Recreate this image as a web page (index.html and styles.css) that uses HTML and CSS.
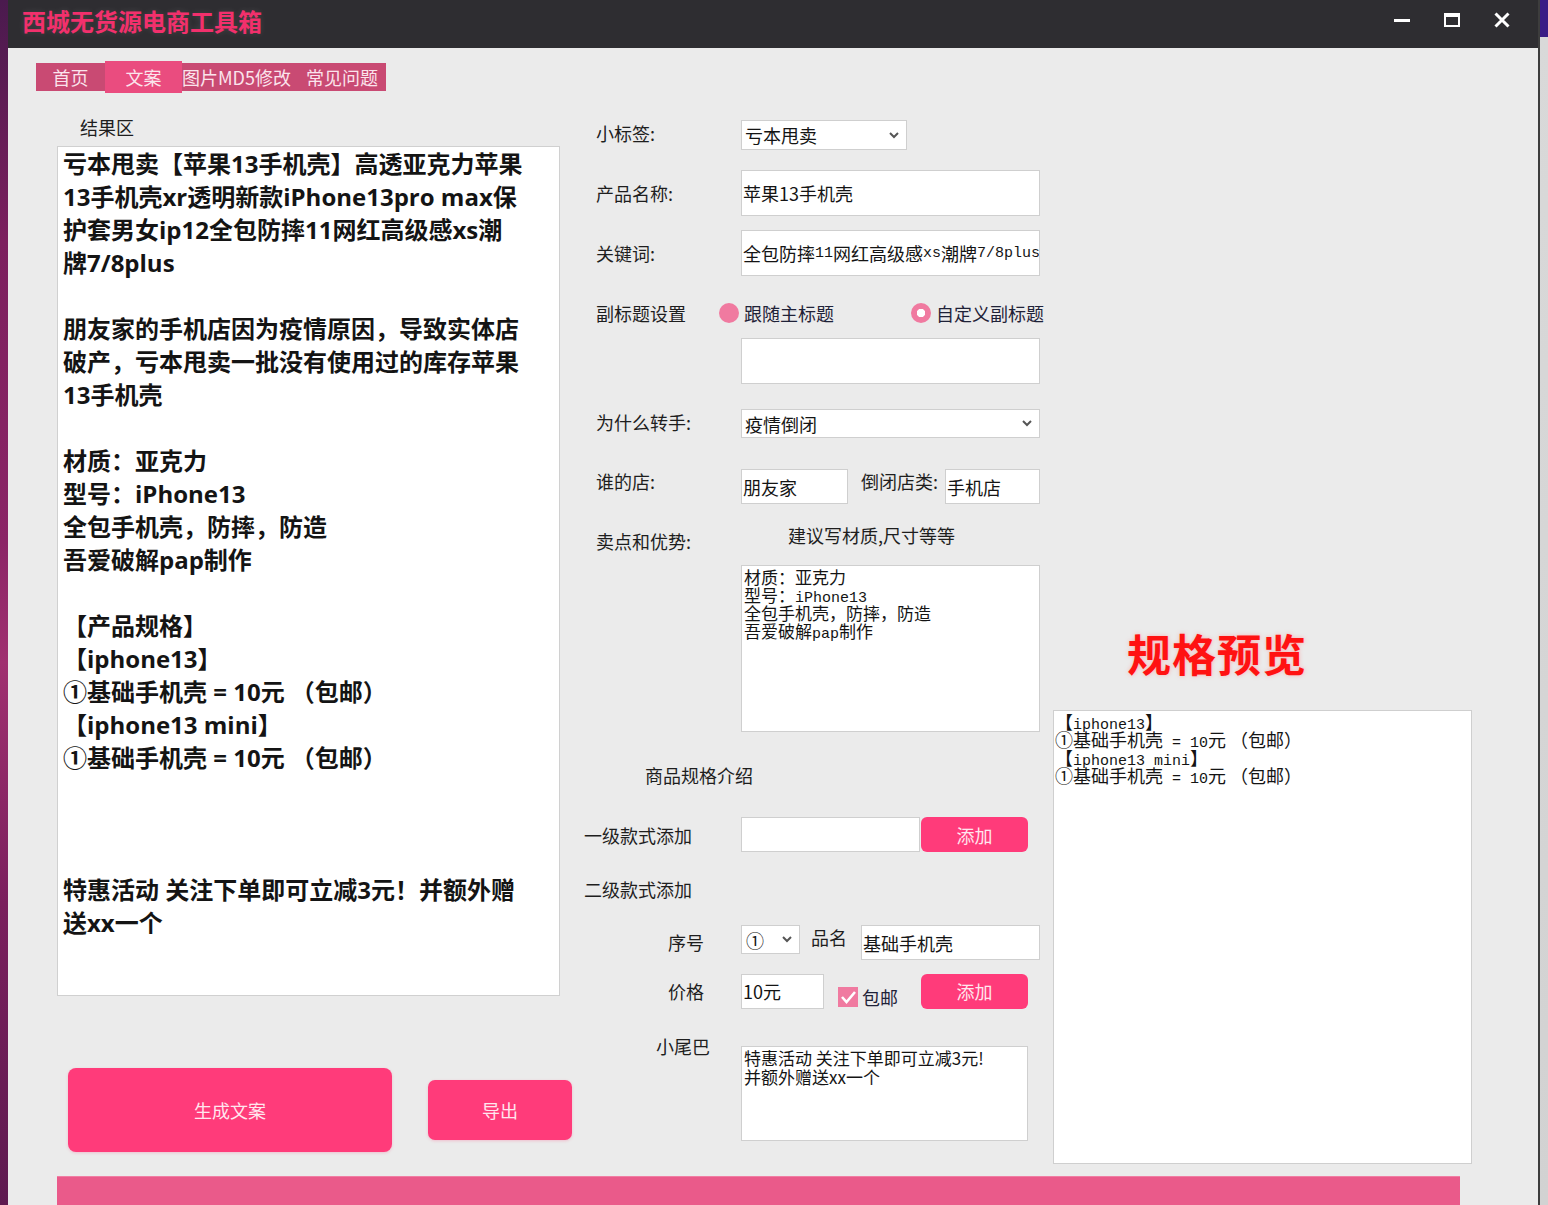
FILE: index.html
```html
<!DOCTYPE html>
<html lang="zh-CN">
<head>
<meta charset="utf-8">
<title>西城无货源电商工具箱</title>
<link rel="stylesheet" href="styles.css">
</head>
<body>
<div class="screen">
  <div class="desk-left"></div>
  <div class="window">
    <header class="titlebar">
      <h1 class="app-title">西城无货源电商工具箱</h1>
      <div class="win-controls">
        <span class="wc"><svg width="16" height="16" viewBox="0 0 16 16"><rect x="0" y="7" width="16" height="3" fill="#fff"/></svg></span>
        <span class="wc"><svg width="16" height="14" viewBox="0 0 16 14"><rect x="1" y="1" width="14" height="12" fill="none" stroke="#fff" stroke-width="2"/><rect x="0" y="0" width="16" height="4" fill="#fff"/></svg></span>
        <span class="wc"><svg width="16" height="16" viewBox="0 0 16 16"><path d="M1.5 1.5 L14.5 14.5 M14.5 1.5 L1.5 14.5" stroke="#fff" stroke-width="3"/></svg></span>
      </div>
    </header>
    <div class="client">
      <nav class="tabs">
        <span class="tab tab-home">首页</span>
        <span class="tab tab-active">文案</span>
        <span class="tab tab-md5">图片MD5修改</span>
        <span class="tab tab-faq">常见问题</span>
      </nav>
      <main class="main">
        <section class="col-left">
          <div class="result-label">结果区</div>
<div class="result-box">亏本甩卖【苹果13手机壳】高透亚克力苹果
13手机壳xr透明新款iPhone13pro max保
护套男女ip12全包防摔11网红高级感xs潮
牌7/8plus

朋友家的手机店因为疫情原因，导致实体店
破产，亏本甩卖一批没有使用过的库存苹果
13手机壳

材质：亚克力
型号：iPhone13
全包手机壳，防摔，防造
吾爱破解pap制作

【产品规格】
【iphone13】
①基础手机壳 = 10元 （包邮）
【iphone13 mini】
①基础手机壳 = 10元 （包邮）



特惠活动 关注下单即可立减3元！并额外赠
送xx一个</div>
          <div class="action-row">
            <button class="btn btn-generate">生成文案</button>
            <button class="btn btn-export">导出</button>
          </div>
        </section>

        <section class="col-mid">
          <div class="form-row row-tag">
            <span class="lbl lbl-up">小标签:</span>
            <div class="field select select-tag"><span class="val">亏本甩卖</span><svg class="chev" width="10" height="7" viewBox="0 0 10 7"><path d="M1 1 L5 5 L9 1" fill="none" stroke="#555" stroke-width="2"/></svg></div>
          </div>
          <div class="form-row row-name">
            <span class="lbl">产品名称:</span>
            <div class="field input-wide tall">苹果13手机壳</div>
          </div>
          <div class="form-row row-kw">
            <span class="lbl">关键词:</span>
            <div class="field input-wide tall">全包防摔<span class="m">11</span>网红高级感<span class="m">xs</span>潮牌<span class="m">7/8plus</span></div>
          </div>
          <div class="form-row row-sub">
            <span class="lbl lbl-radio">副标题设置</span>
            <span class="radio radio-on"></span><span class="radio-text">跟随主标题</span>
            <span class="radio radio-off"></span><span class="radio-text">自定义副标题</span>
          </div>
          <div class="form-row row-subinput">
            <span class="lbl"></span>
            <div class="field input-wide tall"></div>
          </div>
          <div class="form-row row-why">
            <span class="lbl lbl-up">为什么转手:</span>
            <div class="field select select-why"><span class="val">疫情倒闭</span><svg class="chev" width="10" height="7" viewBox="0 0 10 7"><path d="M1 1 L5 5 L9 1" fill="none" stroke="#555" stroke-width="2"/></svg></div>
          </div>
          <div class="form-row row-shop">
            <span class="lbl">谁的店:</span>
            <div class="field input-shop">朋友家</div>
            <span class="lbl-inline">倒闭店类:</span>
            <div class="field input-type">手机店</div>
          </div>
          <div class="form-row row-sell">
            <span class="lbl lbl-sell">卖点和优势:</span>
            <span class="hint">建议写材质,尺寸等等</span>
          </div>
          <div class="form-row row-sellbox">
            <div class="field area area-sell"><div class="ln">材质：亚克力</div><div class="ln">型号：<span class="m">iPhone13</span></div><div class="ln">全包手机壳，防摔，防造</div><div class="ln">吾爱破解<span class="m">pap</span>制作</div></div>
          </div>
          <div class="form-row row-spec">
            <span class="spec-title">商品规格介绍</span>
          </div>
          <div class="form-row row-lvl1">
            <span class="lbl lbl-flush">一级款式添加</span>
            <div class="field input-lvl1"></div>
            <button class="btn btn-add btn-add-1">添加</button>
          </div>
          <div class="form-row row-lvl2">
            <span class="lbl lbl-flush">二级款式添加</span>
          </div>
          <div class="form-row row-idx">
            <span class="lbl lbl-deep">序号</span>
            <div class="field select select-idx"><span class="val">①</span><svg class="chev" width="10" height="7" viewBox="0 0 10 7"><path d="M1 1 L5 5 L9 1" fill="none" stroke="#555" stroke-width="2"/></svg></div>
            <span class="lbl-pm">品名</span>
            <div class="field input-pm">基础手机壳</div>
          </div>
          <div class="form-row row-price">
            <span class="lbl lbl-deep lbl-price">价格</span>
            <div class="field input-price">10元</div>
            <span class="check-group"><span class="checkbox"><svg width="20" height="20" viewBox="0 0 20 20"><path d="M4 10 L8.5 15 L17 5" fill="none" stroke="#fff" stroke-width="2.6"/></svg></span><span class="check-text">包邮</span></span>
            <button class="btn btn-add btn-add-2">添加</button>
          </div>
          <div class="form-row row-tail">
            <span class="lbl lbl-tail">小尾巴</span>
            <div class="field area area-tail"><div class="ln-tail">特惠活动 关注下单即可立减3元!</div><div class="ln-tail">并额外赠送xx一个</div></div>
          </div>
        </section>

        <section class="col-right">
          <h2 class="preview-title">规格预览</h2>
          <div class="preview-box"><div class="ln">【<span class="m">iphone13</span>】</div><div class="ln">①基础手机壳<span class="m"> = 10</span>元 （包邮）</div><div class="ln">【<span class="m">iphone13 mini</span>】</div><div class="ln">①基础手机壳<span class="m"> = 10</span>元 （包邮）</div></div>
        </section>
      </main>
      <div class="bottom-bar"></div>
    </div>
  </div>
  <div class="desk-right"></div>
</div>
</body>
</html>
```

FILE: styles.css
```css
* { box-sizing: border-box; }
html, body { margin: 0; padding: 0; }
body {
  width: 1548px;
  height: 1205px;
  overflow: hidden;
  font-family: "Noto Sans CJK SC", "Noto Sans", sans-serif;
  color: #1e1e1e;
  background: #ebebeb;
}
.screen { display: flex; width: 1548px; height: 1205px; }

.desk-left {
  width: 8px;
  flex: none;
  background: linear-gradient(180deg, #4a1a4e 0%, #7c1f5e 20%, #8b2466 45%, #a03070 55%, #7a1f5d 75%, #5e1a50 100%);
}
.desk-right {
  width: 10px;
  flex: none;
  border-left: 2px solid #3d3d3d;
  background: linear-gradient(180deg, #3b1d86 0, #3b1d86 37px, #d9d9d9 37px, #d2d2d2 100%);
}

.window { width: 1530px; flex: none; display: flex; flex-direction: column; }

.titlebar {
  height: 48px;
  flex: none;
  background: #2e2d31;
  display: flex;
  justify-content: space-between;
  align-items: flex-start;
}
.app-title {
  margin: 0;
  padding-left: 14px;
  font-size: 24px;
  font-weight: 700;
  line-height: 42px;
  color: #f2306c;
  text-shadow: 0 0 6px rgba(255, 255, 255, 0.12);
}
.win-controls { display: flex; padding-right: 11px; }
.wc { width: 50px; height: 40px; display: flex; align-items: center; justify-content: center; }

.client { flex: 1; background: #ebebeb; overflow: hidden; }

.tabs { display: flex; align-items: center; height: 32px; margin: 13px 0 0 28px; }
.tab {
  height: 28px;
  line-height: 28px;
  font-size: 18px;
  color: #fbe4ec;
  background: #c94a73;
  white-space: nowrap;
}
.tab-home { width: 69px; text-align: center; }
.tab-active { width: 77px; height: 32px; line-height: 32px; text-align: center; background: #ea4c7f; }
.tab-md5 { width: 124px; }
.tab-faq { width: 80px; }

.main { display: flex; margin-top: 17px; padding-left: 49px; }

/* left column */
.col-left { width: 527px; flex: none; }
.result-label { margin: 7px 0 0 23px; font-size: 18px; line-height: 20px; }
.result-box {
  margin-top: 9px;
  width: 503px;
  height: 850px;
  background: #fff;
  border: 1px solid #d0d0d0;
  padding: 0 5px 0;
  font-family: "Open Sans", "Noto Sans CJK SC", sans-serif;
  font-weight: 700;
  font-size: 24px;
  line-height: 33px;
  color: #141414;
  white-space: pre;
  overflow: hidden;
}
.action-row { display: flex; align-items: center; gap: 36px; margin-top: 72px; padding-left: 11px; }

.btn {
  border: none;
  background: #ff3b7a;
  color: #ffe6ee;
  font-family: "Noto Sans CJK SC", sans-serif;
  font-size: 18px;
  padding: 0;
  cursor: pointer;
}
.btn-generate { width: 324px; height: 84px; border-radius: 8px; box-shadow: 0 1px 3px rgba(255, 60, 120, 0.25); }
.btn-export { width: 144px; height: 60px; border-radius: 7px; box-shadow: 0 1px 3px rgba(255, 60, 120, 0.25); }

/* middle column */
.col-mid { width: 469px; flex: none; display: flex; flex-direction: column; }
.form-row { display: flex; align-items: center; }
.lbl { width: 157px; flex: none; padding-left: 12px; font-size: 18px; line-height: 24px; white-space: nowrap; }
.lbl-up { margin-top: -4px; }
.lbl-flush { padding-left: 0; }
.lbl-deep { padding-left: 84px; }
.lbl-tail { padding-left: 72px; }

.field {
  background: #fff;
  border: 1px solid #cfcfcf;
  font-size: 18px;
  color: #141414;
  display: flex;
  align-items: center;
  padding-left: 1px;
  white-space: nowrap;
  overflow: hidden;
}
.m { font-family: "Liberation Mono", monospace; font-size: 15px; }
.tall { height: 46px; }
.input-wide { width: 299px; }

.select { justify-content: space-between; padding: 0 7px 0 3px; }
.select .val { line-height: 24px; }
.chev { flex: none; }
.select-tag { width: 166px; height: 30px; }
.select-why { width: 299px; height: 29px; }
.select-idx { width: 59px; height: 29px; padding-left: 4px; }

.row-tag { margin-top: 10px; }
.row-name { margin-top: 20px; }
.row-kw { margin-top: 14px; }
.row-sub { margin-top: 24px; height: 26px; }
.row-subinput { margin-top: 12px; }
.row-why { margin-top: 25px; }
.row-shop { margin-top: 31px; align-items: flex-start; }
.row-sell { margin-top: 19px; align-items: flex-start; }
.row-sellbox { margin-top: 12px; padding-left: 157px; }
.row-spec { margin-top: 31px; }
.row-lvl1 { margin-top: 30px; }
.row-lvl2 { margin-top: 25px; }
.row-idx { margin-top: 24px; align-items: flex-start; }
.row-price { margin-top: 13px; }
.row-tail { margin-top: 25px; align-items: flex-start; }

.lbl-radio { width: 135px; }
.radio { width: 20px; height: 20px; border-radius: 50%; flex: none; background: #f07aa0; }
.radio-off { margin-left: 77px; background: radial-gradient(circle, #fff 0, #fff 4px, #f07aa0 4.5px); }
.radio-text { margin-left: 5px; font-size: 18px; line-height: 24px; color: #1f2238; white-space: nowrap; }

.input-shop { width: 107px; height: 35px; }
.lbl-inline { margin-left: 13px; width: 84px; font-size: 18px; line-height: 24px; white-space: nowrap; }
.input-type { width: 95px; height: 35px; }

.lbl-sell { margin-top: 6px; }
.hint { margin-left: 47px; font-size: 18px; line-height: 24px; white-space: nowrap; }

.area { align-items: flex-start; flex-direction: column; padding-left: 2px; }
.area-sell { width: 299px; height: 167px; font-size: 17px; line-height: 18px; padding-top: 2px; }
.ln { height: 18px; line-height: 18px; white-space: nowrap; }
.ln .m { font-size: 15px; line-height: 18px; }
.area-tail { width: 287px; height: 95px; font-size: 17px; line-height: 19px; padding-top: 1px; margin-top: 12px; }
.ln-tail { height: 19px; line-height: 19px; }

.spec-title { padding-left: 61px; font-size: 18px; line-height: 24px; }

.input-lvl1 { width: 179px; height: 35px; }
.btn-add { width: 107px; height: 35px; border-radius: 6px; flex: none; }
.btn-add-1 { margin-left: 1px; }
.row-idx .lbl-deep { line-height: 35px; }
.lbl-pm { margin-left: 11px; width: 50px; font-size: 18px; line-height: 24px; }
.input-pm { width: 179px; height: 35px; }
.input-price { width: 83px; height: 35px; }
.check-group { display: flex; align-items: center; margin: 12px 0 0 14px; }
.checkbox { width: 20px; height: 20px; background: #f07aa0; display: flex; }
.check-text { margin-left: 4px; font-size: 18px; line-height: 24px; color: #1f2238; }
.btn-add-2 { margin-left: 23px; }

/* right column */
.col-right { width: 419px; flex: none; }
.preview-title {
  margin: 519px 0 0;
  padding-left: 74px;
  font-size: 44px;
  line-height: 48px;
  font-weight: 700;
  color: #ff1212;
  letter-spacing: 1px;
  text-shadow: 0 0 4px rgba(255, 140, 140, 0.6);
}
.preview-box {
  margin-top: 33px;
  height: 454px;
  background: #fff;
  border: 1px solid #cfcfcf;
  padding: 1px 0 0 1px;
  font-size: 18px;
  line-height: 18px;
  color: #141414;
  white-space: nowrap;
}

.bottom-bar {
  margin: 12px 0 0 49px;
  width: 1403px;
  height: 40px;
  background: #ea5a8a;
  border-top: 1px solid #f07ea3;
}
```
